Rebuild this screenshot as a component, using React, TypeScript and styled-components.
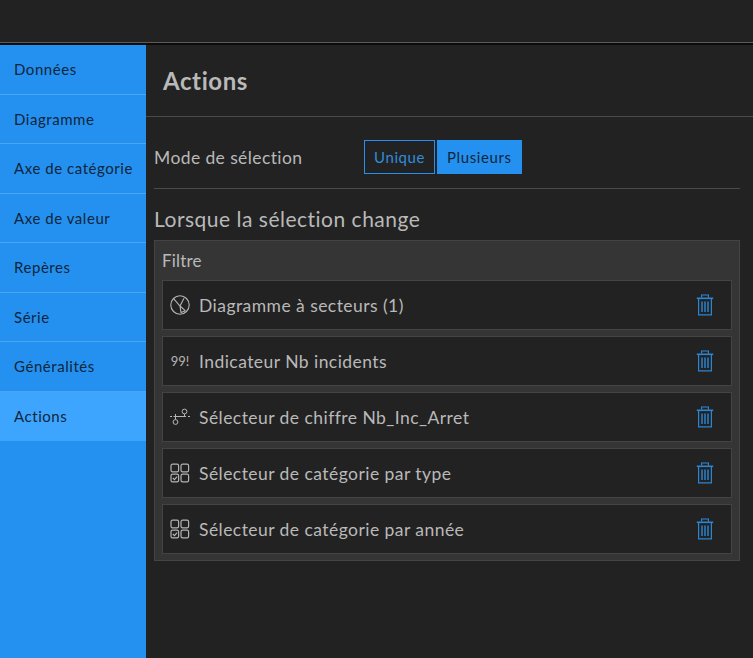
import React from 'react';
import styled, { createGlobalStyle } from 'styled-components';

const GlobalStyle = createGlobalStyle`
  html, body {
    margin: 0;
    padding: 0;
    height: 100%;
    background: #222222;
    overflow: hidden;
  }
  #root {
    height: 100%;
  }
`;

const SIDE_ITEMS = [
  'Données',
  'Diagramme',
  'Axe de catégorie',
  'Axe de valeur',
  'Repères',
  'Série',
  'Généralités',
  'Actions',
];

const Page = styled.div`
  display: flex;
  flex-direction: column;
  width: 753px;
  height: 658px;
  background: #222222;
  font-family: Lato, 'Liberation Sans', sans-serif;
  overflow: hidden;
`;

const TopBar = styled.div`
  flex: none;
  height: 43px;
  box-sizing: border-box;
  border-bottom: 1px solid #5c5c5c;
  background: #222222;
`;

const BlackLine = styled.div`
  flex: none;
  height: 2px;
  background: #0c0c0c;
`;

const Body = styled.div`
  flex: 1;
  display: flex;
  min-height: 0;
`;

const Sidebar = styled.nav`
  flex: none;
  width: 146px;
  background: #2491f0;
`;

const SideItem = styled.div<{ $active?: boolean }>`
  height: 49.5px;
  box-sizing: border-box;
  display: flex;
  align-items: center;
  padding-left: 14px;
  font-size: 15px;
  letter-spacing: 0.55px;
  color: #10253a;
  background: ${(p) => (p.$active ? '#3ea5ff' : 'transparent')};
  border-bottom: 1px solid ${(p) => (p.$active ? 'transparent' : '#4aa5f5')};
`;

const Main = styled.main`
  flex: 1;
  min-width: 0;
`;

const Header = styled.header`
  height: 72px;
  box-sizing: border-box;
  display: flex;
  align-items: center;
  padding-left: 17px;
  border-bottom: 1px solid #4a4a4a;
  font-size: 24px;
  font-weight: 700;
  letter-spacing: 0.6px;
  color: #b9b9b9;
`;

const Content = styled.div`
  padding: 0 13px 0 8px;
`;

const ModeRow = styled.div`
  height: 72px;
  box-sizing: border-box;
  display: flex;
  align-items: center;
  padding-top: 9px;
  border-bottom: 1px solid #4a4a4a;
`;

const ModeLabel = styled.span`
  width: 210px;
  font-size: 17.5px;
  letter-spacing: 0.4px;
  color: #b9b9b9;
`;

const ModeButton = styled.button<{ $selected?: boolean }>`
  height: 34px;
  box-sizing: border-box;
  margin-right: 2px;
  padding: 0 9px;
  border: 1px solid #2491f0;
  border-radius: 0;
  font-family: inherit;
  font-size: 15px;
  letter-spacing: 0.6px;
  color: ${(p) => (p.$selected ? '#10253a' : '#2f8ddc')};
  background: ${(p) => (p.$selected ? '#2491f0' : 'transparent')};
`;

const SectionTitle = styled.h2`
  margin: 0;
  height: 51px;
  box-sizing: border-box;
  padding-top: 7px;
  display: flex;
  align-items: center;
  font-size: 21px;
  font-weight: 400;
  letter-spacing: 0.5px;
  color: #b9b9b9;
`;

const FilterPanel = styled.section`
  box-sizing: border-box;
  height: 321px;
  padding: 0 7px;
  border: 1px solid #444444;
  background: #353535;
`;

const FilterTitle = styled.div`
  height: 39px;
  display: flex;
  align-items: center;
  font-size: 17px;
  letter-spacing: 0.2px;
  color: #b9b9b9;
`;

const RowList = styled.div`
  display: flex;
  flex-direction: column;
  gap: 6px;
`;

const Row = styled.div`
  height: 50px;
  box-sizing: border-box;
  display: flex;
  align-items: center;
  padding: 0 17px 0 7px;
  border: 1px solid #444444;
  background: #222222;
`;

const RowIcon = styled.span`
  flex: none;
  width: 20px;
  height: 20px;
  margin-right: 9px;
  color: #b4b4b4;
  display: flex;
  align-items: center;
  justify-content: center;
`;

const RowLabel = styled.span`
  flex: 1;
  font-size: 17.5px;
  letter-spacing: 0.45px;
  color: #b9b9b9;
`;

const CountIcon = styled.span`
  font-size: 13px;
  letter-spacing: 0;
  color: #b4b4b4;
`;

const Glyph = styled.svg`
  display: block;
`;

const PieIcon = () => (
  <Glyph width="20" height="20" viewBox="0 0 20 20" fill="none" stroke="currentColor" strokeWidth="1.1">
    <circle cx="10" cy="10" r="9.2" />
    <path d="M3.6 3.6L10 11l5.5 4.8M10 11l4-7.8M10 11l1 6.6L15.5 15.8" />
  </Glyph>
);

const SliderIcon = () => (
  <Glyph width="20" height="20" viewBox="0 0 20 20" fill="none" stroke="currentColor" strokeWidth="1">
    <path d="M0 9.5h2M3.5 9.5h12.5M18 9.5h2" />
    <circle cx="14.5" cy="4.5" r="2.4" />
    <circle cx="5.5" cy="15" r="2.4" />
    <path d="M5.5 12.6V7M14.5 7v2.5" />
  </Glyph>
);

const ChoiceIcon = () => (
  <Glyph width="20" height="20" viewBox="0 0 20 20" fill="none" stroke="currentColor" strokeWidth="1.2">
    <rect x="1" y="1.2" width="7.6" height="7.6" rx="1.6" />
    <rect x="11" y="1.2" width="7.6" height="7.6" rx="1.6" />
    <rect x="1" y="11.2" width="7.6" height="7.6" rx="1.6" />
    <rect x="11" y="11.2" width="7.6" height="7.6" rx="1.6" />
    <path d="M2.8 15l1.7 1.7 2.6-3" />
  </Glyph>
);

const TrashIcon = () => (
  <Glyph width="18" height="22" viewBox="0 0 18 22" fill="none" stroke="#2a86d4" strokeWidth="1.2">
    <path d="M0.8 4.3h16.4" strokeWidth="1.6" />
    <path d="M5.6 3.6V1h6.8v2.6" />
    <path d="M2.6 5v15.8h12.8V5" />
    <path d="M6 7.5v10.5M9 7.5v10.5M12 7.5v10.5" strokeWidth="1.4" />
  </Glyph>
);

const FILTER_ROWS = [
  { label: 'Diagramme à secteurs (1)', icon: <PieIcon /> },
  { label: 'Indicateur Nb incidents', icon: <CountIcon>99!</CountIcon> },
  { label: 'Sélecteur de chiffre Nb_Inc_Arret', icon: <SliderIcon /> },
  { label: 'Sélecteur de catégorie par type', icon: <ChoiceIcon /> },
  { label: 'Sélecteur de catégorie par année', icon: <ChoiceIcon /> },
];

export default function App() {
  return (
    <Page>
      <GlobalStyle />
      <TopBar />
      <BlackLine />
      <Body>
        <Sidebar>
          {SIDE_ITEMS.map((item) => (
            <SideItem key={item} $active={item === 'Actions'}>
              {item}
            </SideItem>
          ))}
        </Sidebar>
        <Main>
          <Header>Actions</Header>
          <Content>
            <ModeRow>
              <ModeLabel>Mode de sélection</ModeLabel>
              <ModeButton>Unique</ModeButton>
              <ModeButton $selected>Plusieurs</ModeButton>
            </ModeRow>
            <SectionTitle>Lorsque la sélection change</SectionTitle>
            <FilterPanel>
              <FilterTitle>Filtre</FilterTitle>
              <RowList>
                {FILTER_ROWS.map((row) => (
                  <Row key={row.label}>
                    <RowIcon>{row.icon}</RowIcon>
                    <RowLabel>{row.label}</RowLabel>
                    <TrashIcon />
                  </Row>
                ))}
              </RowList>
            </FilterPanel>
          </Content>
        </Main>
      </Body>
    </Page>
  );
}
